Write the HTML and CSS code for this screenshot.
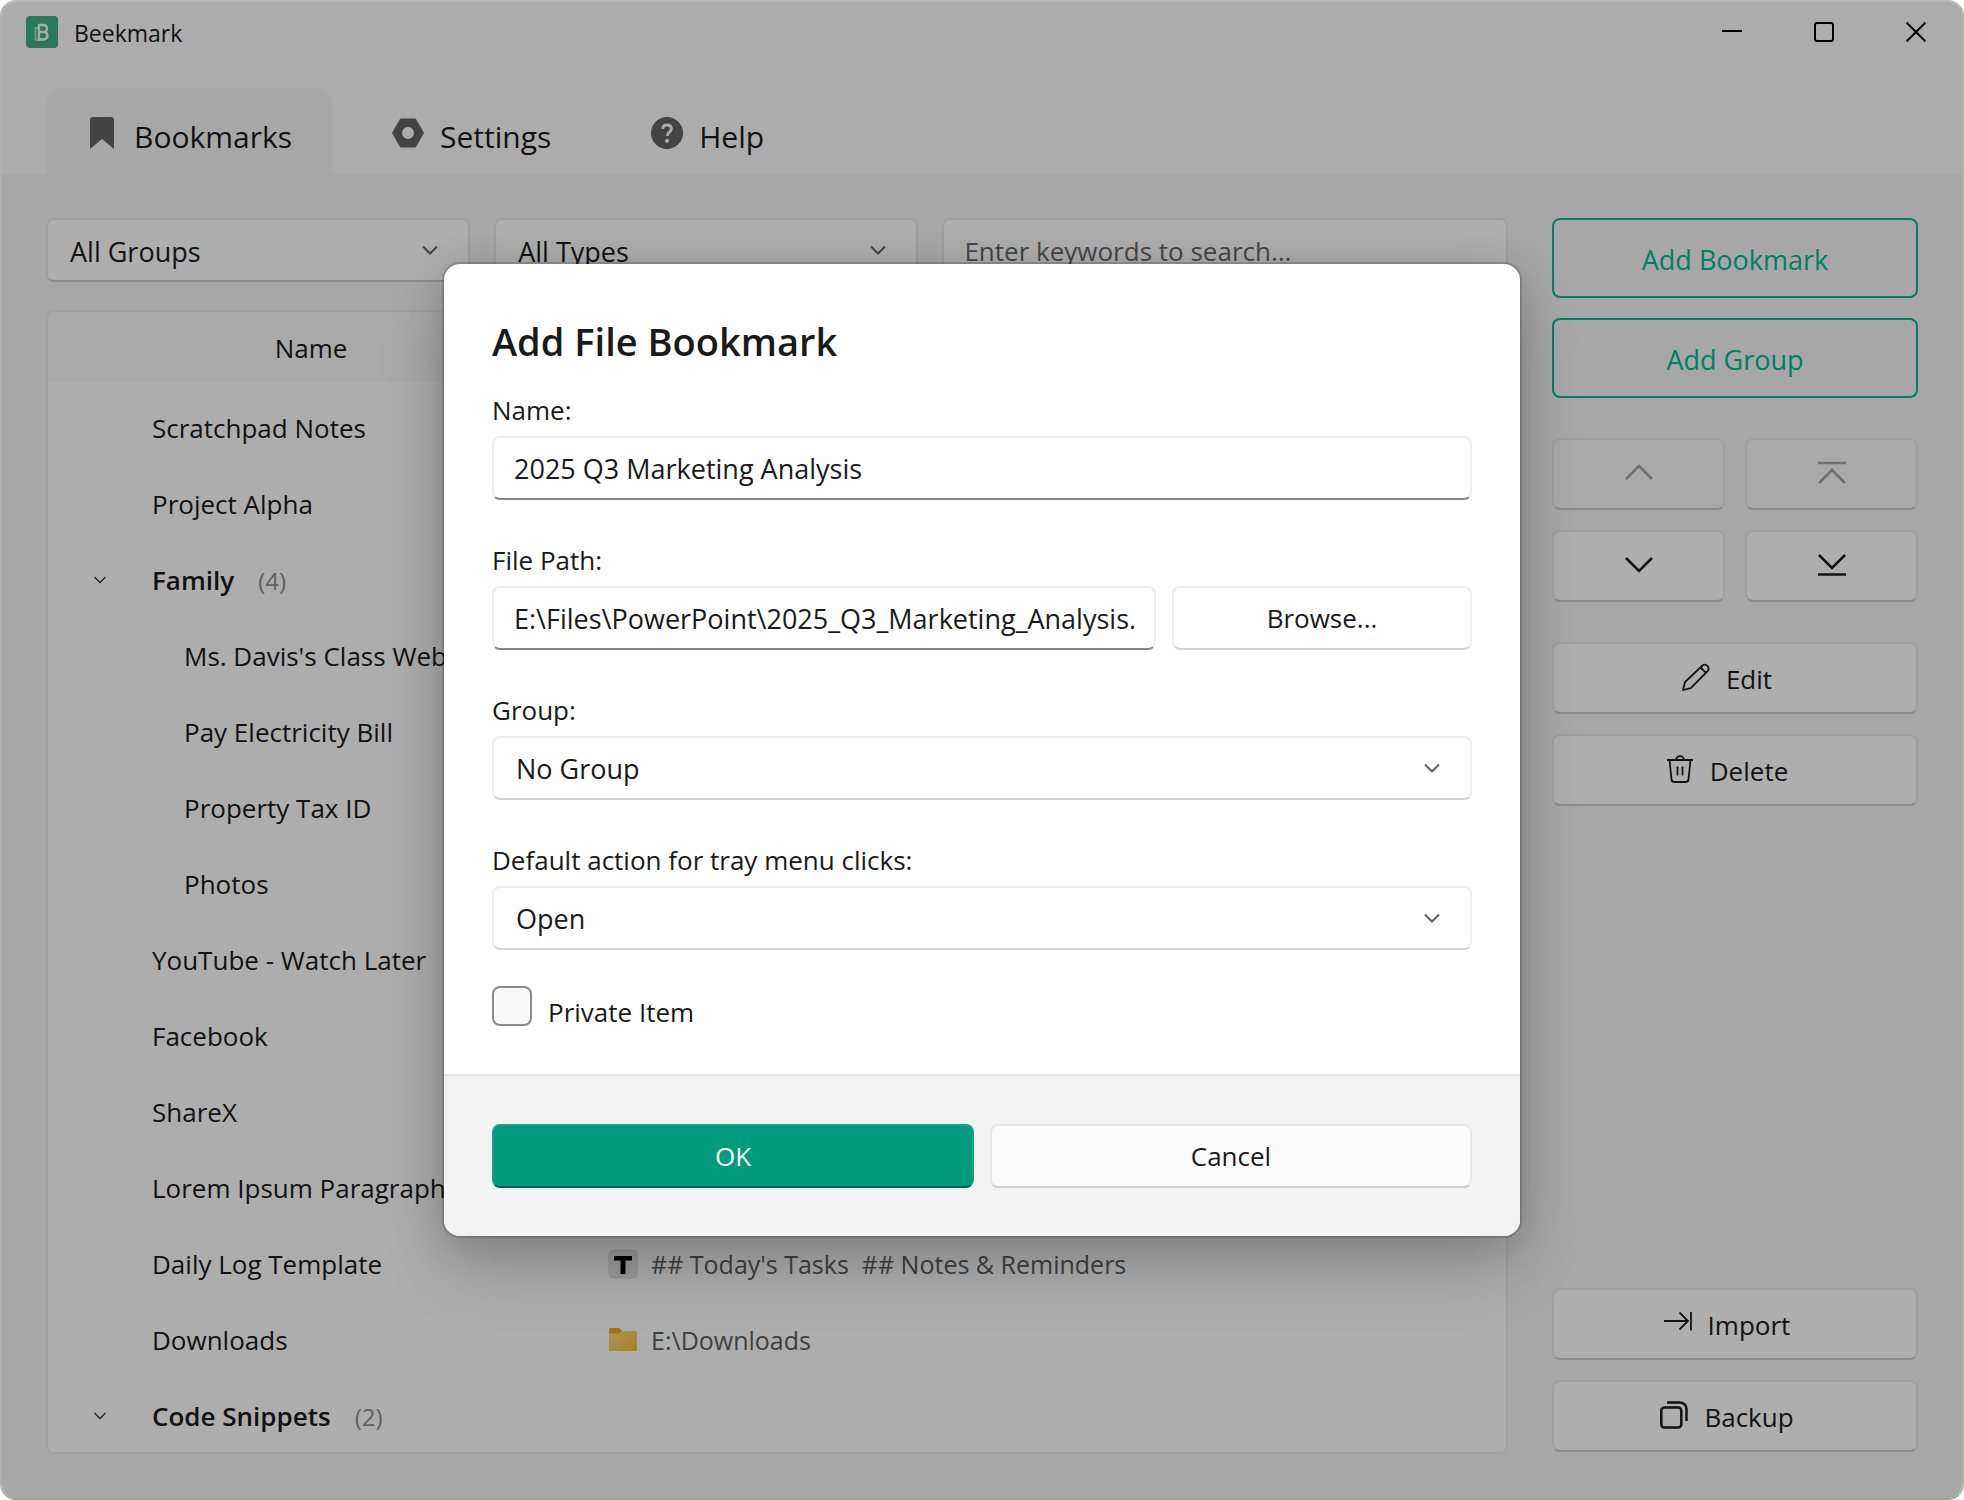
FILE: index.html
```html
<!DOCTYPE html>
<html lang="en">
<head>
<meta charset="utf-8">
<meta name="viewport" content="width=device-width, initial-scale=1">
<title>Beekmark</title>
<link rel="stylesheet" href="styles.css">
</head>
<body>
<div class="window">
  <header class="titlebar">
    <svg class="logo" viewBox="0 0 32 32" aria-hidden="true">
      <rect width="32" height="32" rx="4" fill="#3dae85"/>
      <g fill="none" stroke-linejoin="round">
        <path d="M14 12H9.500V24H14" stroke="#9fd6c1" stroke-width="2"/>
        <path d="M13 9h4.500a3.500 3.500 0 0 1 0 7H13zM13 16h5a4 3.800 0 0 1 0 7.500H13z" stroke="#f4f4f4" stroke-width="2.400"/>
      </g>
    </svg>
    <span class="app-name">Beekmark</span>
    <div class="window-controls">
      <button class="window-button" type="button" aria-label="Minimize"><svg width="20" height="20" viewBox="0 0 20 20"><path d="M0 9H20"/></svg></button>
      <button class="window-button" type="button" aria-label="Maximize"><svg width="20" height="20" viewBox="0 0 20 20"><rect x="1" y="1" width="18" height="18" rx="2"/></svg></button>
      <button class="window-button" type="button" aria-label="Close"><svg width="20" height="20" viewBox="0 0 20 20"><path d="M0.500 0.500L19.500 19.500M19.500 0.500L0.500 19.500"/></svg></button>
    </div>
  </header>

  <nav class="tabs">
    <a class="tab tab-active" href="#bookmarks">
      <svg class="tab-icon" viewBox="0 0 32 32" aria-hidden="true"><path d="M7 0H25a3 3 0 0 1 3 3V32L16 22L4 32V3a3 3 0 0 1 3-3z"/></svg>
      Bookmarks
    </a>
    <a class="tab" href="#settings">
      <svg class="tab-icon" viewBox="0 0 32 32" aria-hidden="true"><path fill-rule="evenodd" d="M9.500 1.500H22.500a2 2 0 0 1 1.800 1L31.500 15a2 2 0 0 1 0 2L24.300 29.500a2 2 0 0 1-1.800 1H9.500a2 2 0 0 1-1.800-1L.5 17a2 2 0 0 1 0-2L7.700 2.500a2 2 0 0 1 1.800-1zM16 10a6 6 0 1 0 0 12a6 6 0 0 0 0-12z"/></svg>
      Settings
    </a>
    <a class="tab" href="#help">
      <svg class="tab-icon" viewBox="0 0 32 32" aria-hidden="true"><circle cx="16" cy="16" r="16"/><path d="M11.700 11.800C11.900 9.300 13.600 8 16 8c2.500 0 4.400 1.400 4.400 3.700 0 3.500-4.200 3.500-4.200 7.300" fill="none" stroke="#f7f7f7" stroke-width="2.800"/><circle cx="16" cy="23.800" r="2.100" fill="#f7f7f7"/></svg>
      Help
    </a>
  </nav>

  <main class="content">
    <section class="browser">
      <div class="filters">
        <div class="select-wrap">
          <select class="field select" aria-label="Group filter"><option>All Groups</option></select>
          <svg class="select-arrow" viewBox="0 0 16 10"><path d="M1 1.500L8 8.500L15 1.500"/></svg>
        </div>
        <div class="select-wrap">
          <select class="field select" aria-label="Type filter"><option>All Types</option></select>
          <svg class="select-arrow" viewBox="0 0 16 10"><path d="M1 1.500L8 8.500L15 1.500"/></svg>
        </div>
        <input class="field input search" type="search" placeholder="Enter keywords to search..." aria-label="Search">
      </div>

      <div class="table-card">
        <table class="bookmarks">
          <thead>
            <tr><th class="col-name" scope="col">Name</th><td></td></tr>
          </thead>
          <tbody>
            <tr><td>Scratchpad Notes</td><td></td></tr>
            <tr><td>Project Alpha</td><td></td></tr>
            <tr class="group-row"><td><svg class="expander" viewBox="0 0 12 8"><path d="M0.500 1L6 6.500L11.500 1"/></svg>Family<span class="count">(4)</span></td><td></td></tr>
            <tr class="child-row"><td>Ms. Davis's Class Website</td><td></td></tr>
            <tr class="child-row"><td>Pay Electricity Bill</td><td></td></tr>
            <tr class="child-row"><td>Property Tax ID</td><td></td></tr>
            <tr class="child-row"><td>Photos</td><td></td></tr>
            <tr><td>YouTube - Watch Later</td><td></td></tr>
            <tr><td>Facebook</td><td></td></tr>
            <tr><td>ShareX</td><td></td></tr>
            <tr><td>Lorem Ipsum Paragraph</td><td></td></tr>
            <tr><td>Daily Log Template</td><td class="value"><div class="value-line">
              <svg class="value-icon" viewBox="0 0 30 30" aria-hidden="true"><rect x="1" y="1" width="28" height="28" rx="4" fill="#dedede" stroke="#d4d4d4"/><path d="M6 7H24V11.500H17.500V25H12.500V11.500H6z" fill="#000"/></svg>
              <span class="value-text">## Today's Tasks  ## Notes &amp; Reminders</span></div></td></tr>
            <tr><td>Downloads</td><td class="value"><div class="value-line">
              <svg class="value-icon" viewBox="0 0 30 30" aria-hidden="true"><defs><linearGradient id="folder" x1="0" y1="0" x2="1" y2="1"><stop offset="0" stop-color="#f5d68a"/><stop offset="1" stop-color="#eeb72f"/></linearGradient></defs><path d="M1 4a1 1 0 0 1 1-1H11l3 2.500L11 10H1z" fill="#eba714"/><path d="M1 8.500H11L14 6H28a1 1 0 0 1 1 1V25a1 1 0 0 1-1 1H2a1 1 0 0 1-1-1z" fill="url(#folder)"/></svg>
              <span class="value-text">E:\Downloads</span></div></td></tr>
            <tr class="group-row"><td><svg class="expander" viewBox="0 0 12 8"><path d="M0.500 1L6 6.500L11.500 1"/></svg>Code Snippets<span class="count">(2)</span></td><td></td></tr>
          </tbody>
        </table>
      </div>
    </section>

    <aside class="actions">
      <button class="button accent-outline" type="button">Add Bookmark</button>
      <button class="button accent-outline" type="button">Add Group</button>
      <div class="move-grid">
        <button class="button" type="button" aria-label="Move up" disabled><svg class="move-icon" viewBox="0 0 28 28"><path d="M1 19L14 6L27 19"/></svg></button>
        <button class="button" type="button" aria-label="Move to top" disabled><svg class="move-icon" viewBox="0 0 28 28"><path d="M0 3H28M1 23L14 10L27 23"/></svg></button>
        <button class="button" type="button" aria-label="Move down"><svg class="move-icon" viewBox="0 0 28 28"><path d="M1 6L14 19L27 6"/></svg></button>
        <button class="button" type="button" aria-label="Move to bottom"><svg class="move-icon" viewBox="0 0 28 28"><path d="M1 3L14 16L27 3M0 22.500H28"/></svg></button>
      </div>
      <div class="action-group">
        <button class="button" type="button"><svg class="action-icon" viewBox="0 0 28 28"><path d="M1 27L3 19L20.500 2.500a3.800 3.800 0 0 1 5.300 5.300L9 25zM18.500 4.500L24 9.800"/></svg>Edit</button>
        <button class="button" type="button"><svg class="action-icon" viewBox="0 0 28 28"><path d="M1 5H27M3.500 5L5.500 24.500a3 3 0 0 0 3 2.500H19.500a3 3 0 0 0 3-2.500L24.500 5M10 5a4 3.800 0 0 1 8 0M11.500 11.500V20.500M16.500 11.500V20.500"/></svg>Delete</button>
      </div>
      <div class="action-group action-group-end">
        <button class="button" type="button"><svg class="action-icon" viewBox="0 0 28 28"><path d="M0 12H24M15.500 3.500L24 12L15.500 20.500M27 3V21.500"/></svg>Import</button>
        <button class="button" type="button"><svg class="action-icon" viewBox="0 0 28 28"><g stroke-width="2.500"><rect x="1.300" y="6.500" width="20" height="20" rx="3"/><path d="M7 1.500H20a6.500 6.500 0 0 1 6.500 6.500V20"/></g></svg>Backup</button>
      </div>
    </aside>
  </main>

  <div class="overlay">
    <form class="dialog" role="dialog" aria-labelledby="dialog-title">
      <div class="dialog-body">
        <h1 class="dialog-title" id="dialog-title">Add File Bookmark</h1>
        <div class="form-row">
          <label class="label" for="name">Name:</label>
          <input class="field input" id="name" type="text" value="2025 Q3 Marketing Analysis">
        </div>
        <div class="form-row">
          <label class="label" for="path">File Path:</label>
          <div class="path-line">
            <input class="field input" id="path" type="text" value="E:\Files\PowerPoint\2025_Q3_Marketing_Analysis.">
            <button class="button dialog-button browse" type="button">Browse...</button>
          </div>
        </div>
        <div class="form-row">
          <label class="label" for="group">Group:</label>
          <div class="select-wrap">
            <select class="field select" id="group"><option>No Group</option></select>
            <svg class="select-arrow" viewBox="0 0 16 10"><path d="M1 1.500L8 8.500L15 1.500"/></svg>
          </div>
        </div>
        <div class="form-row">
          <label class="label" for="action">Default action for tray menu clicks:</label>
          <div class="select-wrap">
            <select class="field select" id="action"><option>Open</option></select>
            <svg class="select-arrow" viewBox="0 0 16 10"><path d="M1 1.500L8 8.500L15 1.500"/></svg>
          </div>
        </div>
        <div class="check-row">
          <input class="checkbox" id="private" type="checkbox">
          <label class="check-label" for="private">Private Item</label>
        </div>
      </div>
      <div class="dialog-footer">
        <button class="button dialog-button primary" type="submit">OK</button>
        <button class="button dialog-button" type="button">Cancel</button>
      </div>
    </form>
  </div>
</div>
</body>
</html>
```
FILE: styles.css
```css
* {
  box-sizing: border-box;
}

body {
  margin: 0;
  background: #fff;
  color: #1a1a1a;
  font-family: "Open Sans", "Noto Sans", sans-serif;
  font-size: 26px;
}

button,
input,
select {
  margin: 0;
  color: inherit;
  font: inherit;
}

svg {
  flex: none;
}

.window {
  position: relative;
  display: flex;
  flex-direction: column;
  min-height: 100vh;
  overflow: hidden;
  border: 2px solid #b0b0b0;
  border-top-color: #b9b9b9;
  border-bottom-color: #a0a0a0;
  border-radius: 16px;
  background: #f7f7f7;
}

/* Title bar */
.titlebar {
  display: flex;
  align-items: center;
  height: 60px;
  padding-left: 24px;
}

.logo {
  width: 32px;
  height: 32px;
  margin-right: 16px;
}

.app-name {
  padding-top: 2px;
  font-size: 23px;
}

.window-controls {
  display: flex;
  margin-left: auto;
}

.window-button {
  display: flex;
  align-items: center;
  justify-content: center;
  width: 92px;
  height: 60px;
  padding: 0;
  border: 0;
  background: none;
}

.window-button svg {
  fill: none;
  stroke: #000;
  stroke-width: 2;
}

/* Tabs */
.tabs {
  display: flex;
  gap: 20px;
  padding: 26px 44px 0;
}

.tab {
  display: flex;
  align-items: center;
  gap: 16px;
  height: 86px;
  padding: 10px 40px 0;
  border-radius: 16px 16px 0 0;
  color: inherit;
  font-size: 30px;
  text-decoration: none;
}

.tab-active {
  background: #f0f0f0;
}

.tab-icon {
  width: 32px;
  height: 32px;
  margin-bottom: 6px;
  fill: #616161;
}

/* Main area */
.content {
  display: grid;
  flex: 1;
  grid-template-columns: minmax(0, 1fr) 366px;
  gap: 44px;
  padding: 44px;
  background: #f0f0f0;
}

.browser {
  display: flex;
  flex-direction: column;
  gap: 28px;
}

.filters {
  display: grid;
  grid-template-columns: 3fr 3fr 4fr;
  gap: 24px;
}

/* Fields */
.field {
  width: 100%;
  min-width: 0;
  height: 64px;
  border: 2px solid #eee;
  border-bottom-color: #d3d3d3;
  border-radius: 8px;
  outline: 0;
  background: #fefefe;
  font-size: 27px;
  appearance: none;
}

.input {
  padding: 0 10px 0 20px;
  border-bottom-color: #868686;
}

.select {
  padding: 0 64px 0 22px;
}

.filters .field {
  padding-top: 2px;
  border-color: #e4e4e4;
  border-bottom-color: #c8c8c8;
  background: #fafafa;
}

.filters .search {
  font-size: 26px;
}

.search::placeholder {
  color: #666;
  opacity: 1;
}

.select-wrap {
  display: grid;
  align-items: center;
}

.select-wrap > * {
  grid-area: 1 / 1;
}

.select-arrow {
  justify-self: end;
  width: 16px;
  height: 10px;
  margin-right: 32px;
  fill: none;
  stroke: #606060;
  stroke-width: 2;
  pointer-events: none;
}

/* Bookmark table */
.table-card {
  flex: 1;
  overflow: hidden;
  border: 2px solid #e5e5e5;
  border-radius: 8px;
  background: #f8f8f8;
}

.bookmarks {
  width: 100%;
  border-collapse: collapse;
  table-layout: fixed;
}

.bookmarks thead {
  background: #f2f2f2;
}

.bookmarks th {
  height: 70px;
  padding: 2px 0 0;
  font-weight: 400;
}

.col-name {
  width: 526px;
}

.bookmarks tbody::before {
  content: "";
  display: block;
  height: 6px;
}

.bookmarks tbody td {
  height: 76px;
  padding: 3px 0 0 104px;
  white-space: nowrap;
}

.bookmarks .child-row td {
  padding-left: 136px;
}

.bookmarks .group-row td {
  padding-left: 46px;
  font-weight: 600;
}

.expander {
  width: 12px;
  height: 8px;
  margin-right: 46px;
  vertical-align: 6px;
  fill: none;
  stroke: #333;
  stroke-width: 1.300;
}

.count {
  margin-left: 24px;
  color: #8c8c8c;
  font-size: 24px;
  font-weight: 400;
}

.bookmarks tbody .value {
  padding-left: 34px;
  color: #5c5c5c;
  font-size: 25px;
}

.value-line {
  display: flex;
  align-items: center;
  gap: 13px;
}

.value-icon {
  width: 30px;
  height: 30px;
}

.value-text {
  white-space: pre;
}

/* Buttons */
.button {
  display: flex;
  align-items: center;
  justify-content: center;
  height: 72px;
  padding: 0;
  border: 2px solid #e4e4e4;
  border-bottom-color: #c8c8c8;
  border-radius: 8px;
  background: #fafafa;
}

.button:disabled {
  background: #f3f3f3;
}

.actions {
  display: flex;
  flex-direction: column;
  gap: 20px;
  padding-bottom: 2px;
}

.actions .accent-outline {
  height: 80px;
  padding-top: 2px;
  border-color: #00b691;
  background: none;
  color: #00b691;
  font-size: 27px;
}

.move-grid {
  display: grid;
  grid-template-columns: 1fr 1fr;
  gap: 20px;
  margin: 20px 0;
}

.move-icon,
.action-icon {
  width: 28px;
  height: 28px;
  fill: none;
  stroke: #1a1a1a;
  stroke-width: 2;
}

.move-icon {
  stroke-width: 2.500;
}

.button:disabled .move-icon {
  stroke: #9f9f9f;
}

.action-icon {
  margin: 0 16px 4px 0;
  stroke-width: 1.800;
}

.action-group {
  display: flex;
  flex-direction: column;
  gap: 20px;
}

.action-group .button {
  padding: 2px 16px 0 0;
}

.action-group-end {
  margin-top: auto;
}

/* Dialog */
.overlay {
  position: absolute;
  inset: 0;
  display: flex;
  align-items: center;
  justify-content: center;
  background: rgba(0, 0, 0, 0.3);
}

.dialog {
  width: 1076px;
  max-width: 92%;
  overflow: hidden;
  border-radius: 16px;
  background: #fff;
  box-shadow: 0 0 0 2px rgba(0, 0, 0, 0.16), 0 32px 64px rgba(0, 0, 0, 0.19), 0 4px 42px rgba(0, 0, 0, 0.15);
}

.dialog-body {
  padding: 48px;
}

.dialog-title {
  margin: 0 0 16px;
  font-size: 38px;
  font-weight: 600;
  line-height: 58px;
}

.form-row {
  margin-bottom: 36px;
}

.label {
  display: block;
  margin-bottom: 2px;
  line-height: 48px;
}

.path-line {
  display: flex;
  gap: 16px;
}

.dialog-button {
  flex: 1;
  height: 64px;
  border-color: #e7e7e7;
  border-bottom-color: #cfcfcf;
  background: #fbfbfb;
}

.browse {
  flex: 0 0 300px;
  border-color: #eee;
  border-bottom-color: #d3d3d3;
  background: #fefefe;
}

.check-row {
  display: flex;
  gap: 16px;
}

.checkbox {
  width: 40px;
  height: 40px;
  border: 2px solid #8a8a8a;
  border-radius: 8px;
  background: #f9f9f9;
  appearance: none;
}

.check-label {
  padding-top: 12px;
  line-height: 28px;
}

.dialog-footer {
  display: flex;
  gap: 16px;
  padding: 48px;
  border-top: 2px solid #e5e5e5;
  background: #f3f3f3;
}

.primary {
  border-color: #14a388;
  border-bottom-color: #00614e;
  background: #009b7d;
  color: #fff;
}
```
